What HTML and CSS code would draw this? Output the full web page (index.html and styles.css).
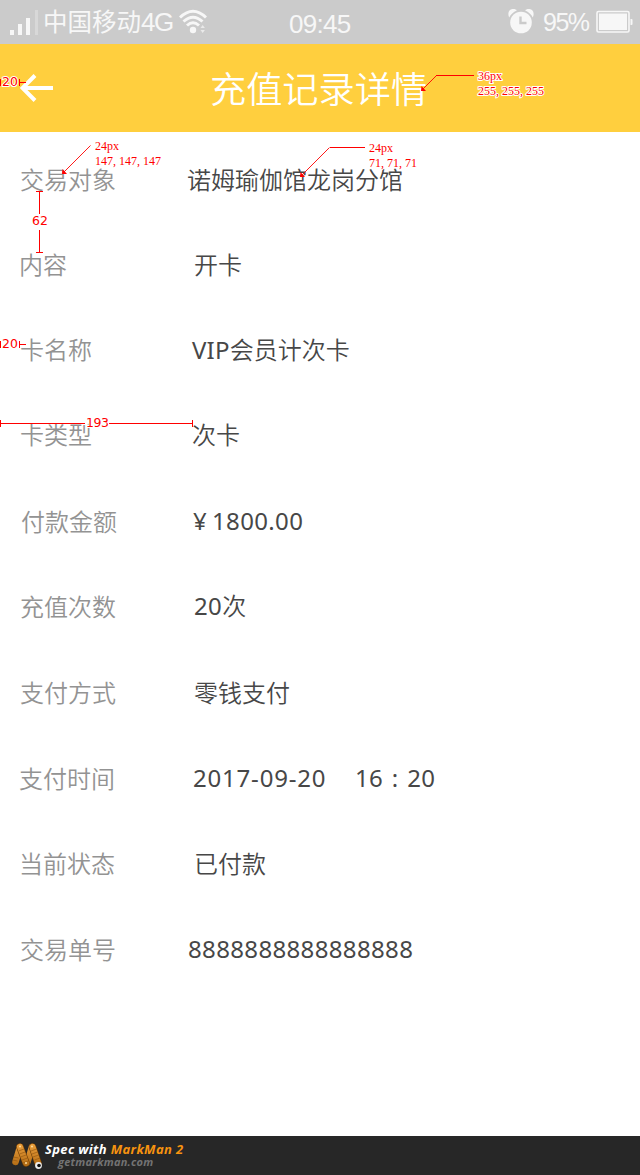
FILE: index.html
```html
<!DOCTYPE html>
<html lang="zh-CN">
<head>
<meta charset="utf-8">
<title>充值记录详情</title>
<link rel="stylesheet" href="styles.css">
</head>
<body>
<div class="page">
  <div class="status">
    <svg class="signal" width="30" height="26" viewBox="0 0 30 26">
      <rect x="1" y="21" width="4" height="5"/><rect x="9" y="15" width="4" height="11"/><rect x="17" y="9" width="4" height="17"/><rect x="26" y="1" width="3" height="25" opacity=".3"/>
    </svg>
    <span class="carrier">中国移动<span class="net">4G</span></span>
    <svg class="wifi" width="28" height="26" viewBox="0 0 28 26">
      <g fill="none" stroke="#f7f7f7" stroke-width="3"><path d="M1 8.500Q14 -4 27 8.500"/><path d="M4.500 12.500Q14 4 23.500 12.500"/><path d="M8 16.500Q14 11 20 16.500"/></g>
      <circle cx="14" cy="21" r="3.200"/><path d="M21.500 19l2.200-3 2.200 3zM21.500 21l2.200 3 2.200-3z" opacity=".7"/>
    </svg>
    <span class="clock">09:45</span>
    <svg class="alarm" width="26" height="26" viewBox="0 0 26 26">
      <circle cx="13" cy="14.500" r="10.800"/><path d="M1.200 9.500C-.8 5 1 1.500 4.500 1 6.500.7 8 1.300 8.800 2.400Q3.500 4.700 1.200 9.500zM24.800 9.500C26.800 5 25 1.500 21.500 1 19.500.7 18 1.300 17.200 2.400Q22.500 4.700 24.800 9.500z"/>
      <path d="M12.500 8.500v6.500h6" fill="none" stroke="#cbcbcb" stroke-width="2.400"/>
    </svg>
    <span class="percent">95%</span>
    <svg class="battery" width="37" height="24" viewBox="0 0 37 24">
      <rect x="1" y="1.500" width="32" height="20.500" rx="1.500" fill="none" stroke="#f7f7f7" stroke-width="1.600"/><rect x="3" y="3.500" width="28" height="16.500"/><path d="M34.500 9h1q1 0 1 1v4q0 1-1 1h-1z"/>
    </svg>
  </div>
  <header class="bar">
    <svg class="back" width="34" height="28" viewBox="0 0 34 28"><path d="M2.500 14H33M15 1.500 2.500 14 15 26.500" fill="none" stroke="#fff" stroke-width="4"/></svg>
    <h1 class="title">充值记录详情</h1>
  </header>
  <dl class="details">
    <div class="row"><dt>交易对象</dt><dd>诺姆瑜伽馆龙岗分馆</dd></div>
    <div class="row"><dt>内容</dt><dd>开卡</dd></div>
    <div class="row"><dt>卡名称</dt><dd><span class="vip">VIP</span>会员计次卡</dd></div>
    <div class="row"><dt>卡类型</dt><dd>次卡</dd></div>
    <div class="row"><dt>付款金额</dt><dd class="number"><span class="yen">¥</span>1800.00</dd></div>
    <div class="row"><dt>充值次数</dt><dd class="number">20<span class="unit">次</span></dd></div>
    <div class="row"><dt>支付方式</dt><dd>零钱支付</dd></div>
    <div class="row"><dt>支付时间</dt><dd class="number"><span class="date">2017-09-20</span>16<span class="colon">:</span>20</dd></div>
    <div class="row"><dt>当前状态</dt><dd>已付款</dd></div>
    <div class="row"><dt>交易单号</dt><dd class="number">8888888888888888</dd></div>
  </dl>
  <footer class="foot">
    <svg class="logo" width="32" height="28" viewBox="0 0 32 28">
      <defs><linearGradient id="g" gradientUnits="userSpaceOnUse" x1="0" y1="0" x2="0" y2="28"><stop offset="0" stop-color="#efa33f"/><stop offset="1" stop-color="#a8620d"/></linearGradient></defs>
      <g fill="none" stroke="url(#g)" stroke-linecap="round"><path d="M4.500 20 9 5M16.500 20 21 5" stroke-width="6.500"/><path d="M9 5 15 21M21.500 5 27 21" stroke="#6d3c05" stroke-width="7.500"/><path d="M9 5 15 21M21.500 5 27 21" stroke-width="6.300"/></g>
      <g fill="none" stroke="#8f530d" stroke-width=".6"><path d="M7.500 9l5.500-2M8.500 12l5.500-2M9.500 15l5.500-2M11 18l5.500-2M12 21l5.500-2M20 9l5.500-2M21 12l5.500-2M22 15l5.500-2M23.500 18l5.500-2M2.500 15l5 1M1.500 18l5 1"/></g>
      <circle cx="9" cy="4.500" r="1" fill="#ffdb9b"/><circle cx="21" cy="4.500" r="1" fill="#ffdb9b"/><circle cx="15" cy="21" r="1" fill="#ffdb9b"/>
      <circle cx="27.500" cy="23.500" r="3.400" fill="#eee"/><circle cx="28" cy="23.500" r="1.800" fill="#111"/>
    </svg>
    <div class="credit">
      <div class="spec">Spec with <span class="brand">MarkMan 2</span></div>
      <div class="site">getmarkman.com</div>
    </div>
  </footer>
  <svg class="marks" width="640" height="1175" viewBox="0 0 640 1175">
    <g fill="none" stroke="#ff0000" stroke-width="1">
      <path d="M.5 79v7M19.500 79v7M20 82.500h6M.5 341v7M19.500 341v7M20 344.500h6"/>
      <path d="M36 191.500h7M39.500 192v22M39.500 230v22M36 252.500h7"/>
      <path d="M.5 420v7M1 423.500h84M109 423.500h83M192.500 420v7"/>
      <path d="M436 75.500h38M330 147.500h35"/>
    </g>
    <g fill="none" stroke="#ff0000" stroke-width=".9"><path d="M436.500 75.500 423 89M90.500 145.500 64 172M329.500 147.500 302 175"/></g>
    <g fill="#ff0000"><path d="M421.500 86l4.500 5h-5zM62.500 169l4.500 5h-5zM300.500 172l4.500 5h-5z"/></g>
    <g class="measure">
      <text x="2" y="86" textLength="16">20</text>
      <text x="2" y="348" textLength="16">20</text>
      <text x="32" y="225" textLength="16">62</text>
      <text x="86" y="427" textLength="23">193</text>
    </g>
    <g class="note">
      <text x="478" y="80">36px</text><text x="478" y="95">255, 255, 255</text>
      <text x="95" y="150">24px</text><text x="95" y="165">147, 147, 147</text>
      <text x="369" y="152">24px</text><text x="369" y="167">71, 71, 71</text>
    </g>
  </svg>
</div>
</body>
</html>
```
FILE: styles.css
```css
* { box-sizing: border-box; }
body { margin: 0; background: #fff; font-family: "Noto Sans", "Noto Sans CJK SC", sans-serif; }
.page { position: relative; width: 640px; height: 1175px; display: flex; flex-direction: column; overflow: hidden; }

.status { height: 44px; flex: none; display: flex; align-items: center; padding-left: 9px; background: #cbcbcb; color: #f7f7f7; fill: #f7f7f7; font-family: "Liberation Sans", "Noto Sans CJK SC", sans-serif; font-size: 26px; white-space: nowrap; }
.status span { line-height: 44px; }
.signal { flex: none; margin-bottom: 1px; }
.carrier { width: 136px; margin-left: 4px; font-size: 24.5px; }
.net { font-size: 26px; letter-spacing: -1.5px; }
.wifi { flex: none; margin-top: -1px; }
.clock { width: 80px; margin: 3px 0 0 82px; letter-spacing: -.7px; }
.alarm { flex: none; margin: -2px 0 0 139px; }
.percent { width: 53px; margin: -1px 0 0 9px; font-size: 25px; letter-spacing: -1.5px; }
.battery { flex: none; }

.bar { height: 88px; flex: none; display: flex; align-items: center; padding-left: 20px; background: #ffcf3e; color: #fff; }
.back { flex: none; }
.title { margin: 1px 0 0 156px; font-size: 36.2px; line-height: 50px; font-weight: 350; }

.details { flex: 1; margin: 0; padding-top: 33px; font-size: 24px; line-height: 30px; font-weight: 350; }
.row { display: grid; grid-template-columns: 174px 1fr; height: 30px; margin: 0 0 55px 20px; }
.row:nth-child(4) { margin-bottom: 57px; }
.row:nth-child(6), .row:nth-child(7), .row:nth-child(9) { margin-bottom: 56px; }
.row:nth-child(1) { grid-template-columns: 167px 1fr; }
.row:nth-child(2), .row:nth-child(9) { margin-left: 19px; grid-template-columns: 175px 1fr; }
.row:nth-child(3), .row:nth-child(4) { grid-template-columns: 172px 1fr; }
.row:nth-child(5) { margin-left: 21px; grid-template-columns: 172px 1fr; }
.row:nth-child(8) { margin-left: 19px; grid-template-columns: 174px 1fr; }
.row:nth-child(10) { grid-template-columns: 168px 1fr; }
dt { color: #939393; }
dd { margin: 0; color: #474747; white-space: nowrap; }
.number { margin-top: -1px; font-weight: 400; letter-spacing: .35px; }
.vip { font-weight: 400; letter-spacing: .2px; }
.unit { font-weight: 350; }
.yen { display: inline-block; width: 19px; }
.date { display: inline-block; width: 162px; letter-spacing: .8px; }
.colon { display: inline-block; width: 24px; text-align: center; }

.foot { height: 39px; flex: none; display: flex; padding: 5px 0 0 11px; background: #272727; font-family: "Open Sans", sans-serif; font-style: italic; font-weight: 700; white-space: nowrap; }
.logo { flex: none; margin-top: 1px; }
.credit { padding-left: 2px; }
.spec { color: #fff; font-size: 13px; line-height: 16px; letter-spacing: .35px; }
.brand { color: #f7930f; }
.site { padding-left: 13px; color: #737373; font-size: 11px; line-height: 10px; letter-spacing: .25px; }

.marks { position: absolute; left: 0; top: 0; }
.measure, .note { fill: #f00; stroke: #fff; stroke-width: 2px; paint-order: stroke; }
.measure { font-family: "DejaVu Sans", sans-serif; font-size: 12.5px; }
.note { font-family: "Liberation Serif", serif; font-size: 12px; }
```
